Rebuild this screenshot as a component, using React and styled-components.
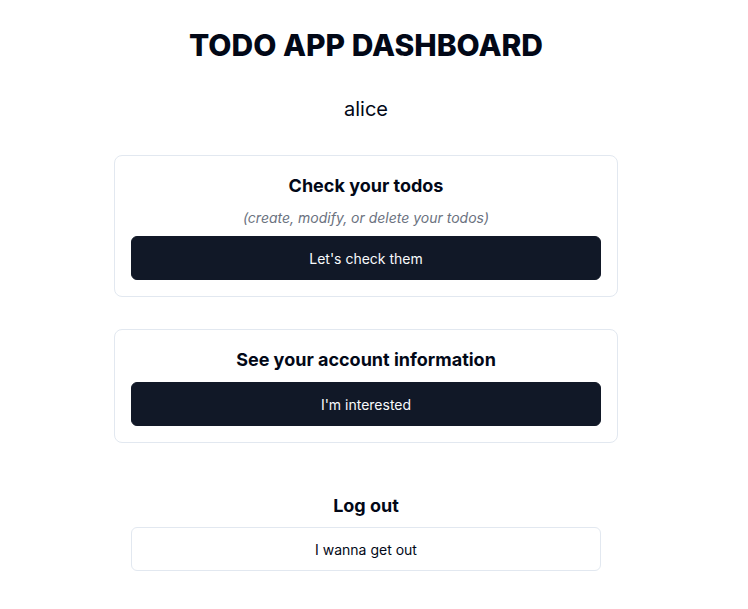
import React from "react";
import styled, { createGlobalStyle } from "styled-components";

const GlobalStyle = createGlobalStyle`
  body {
    margin: 0;
    background: #ffffff;
    font-family: Inter, "Noto Sans", sans-serif;
    color: #020817;
  }
`;

const Page = styled.main`
  display: flex;
  flex-direction: column;
  align-items: center;
  gap: 32px;
  padding: 27px 16px 32px 0;
`;

const Title = styled.h1`
  margin: 0;
  font-size: 30px;
  line-height: 36px;
  font-weight: 800;
  color: #020817;
`;

const UserName = styled.p`
  margin: 0;
  font-size: 20px;
  line-height: 28px;
  color: #020817;
`;

const Card = styled.section`
  width: 504px;
  box-sizing: border-box;
  padding: ${({ $plain }) => ($plain ? "17px" : "16px")};
  display: flex;
  flex-direction: column;
  align-items: center;
  gap: ${({ $plain }) => ($plain ? "7px" : "8px")};
  border: ${({ $plain }) => ($plain ? "none" : "1px solid #e2e8f0")};
  border-radius: 8px;
  background: #ffffff;
`;

const CardTitle = styled.h2`
  margin: 0;
  font-size: 18px;
  line-height: 28px;
  font-weight: 700;
  color: #020817;
`;

const CardNote = styled.p`
  margin: 0;
  font-size: 14px;
  line-height: 20px;
  font-style: italic;
  color: #6b7280;
`;

const Button = styled.button`
  width: 100%;
  height: 44px;
  box-sizing: border-box;
  border-radius: 6px;
  font-family: Inter, "Noto Sans", sans-serif;
  font-size: 14px;
  cursor: pointer;
  border: 1px solid ${({ $outline }) => ($outline ? "#e2e8f0" : "#111827")};
  background: ${({ $outline }) => ($outline ? "#ffffff" : "#111827")};
  color: ${({ $outline }) => ($outline ? "#020817" : "#f8fafc")};
`;

export default function App() {
  return (
    <>
      <GlobalStyle />
      <Page>
        <Title>TODO APP DASHBOARD</Title>
        <UserName>alice</UserName>
        <Card>
          <CardTitle>Check your todos</CardTitle>
          <CardNote>(create, modify, or delete your todos)</CardNote>
          <Button>Let's check them</Button>
        </Card>
        <Card>
          <CardTitle>See your account information</CardTitle>
          <Button>I'm interested</Button>
        </Card>
        <Card $plain>
          <CardTitle>Log out</CardTitle>
          <Button $outline>I wanna get out</Button>
        </Card>
      </Page>
    </>
  );
}
